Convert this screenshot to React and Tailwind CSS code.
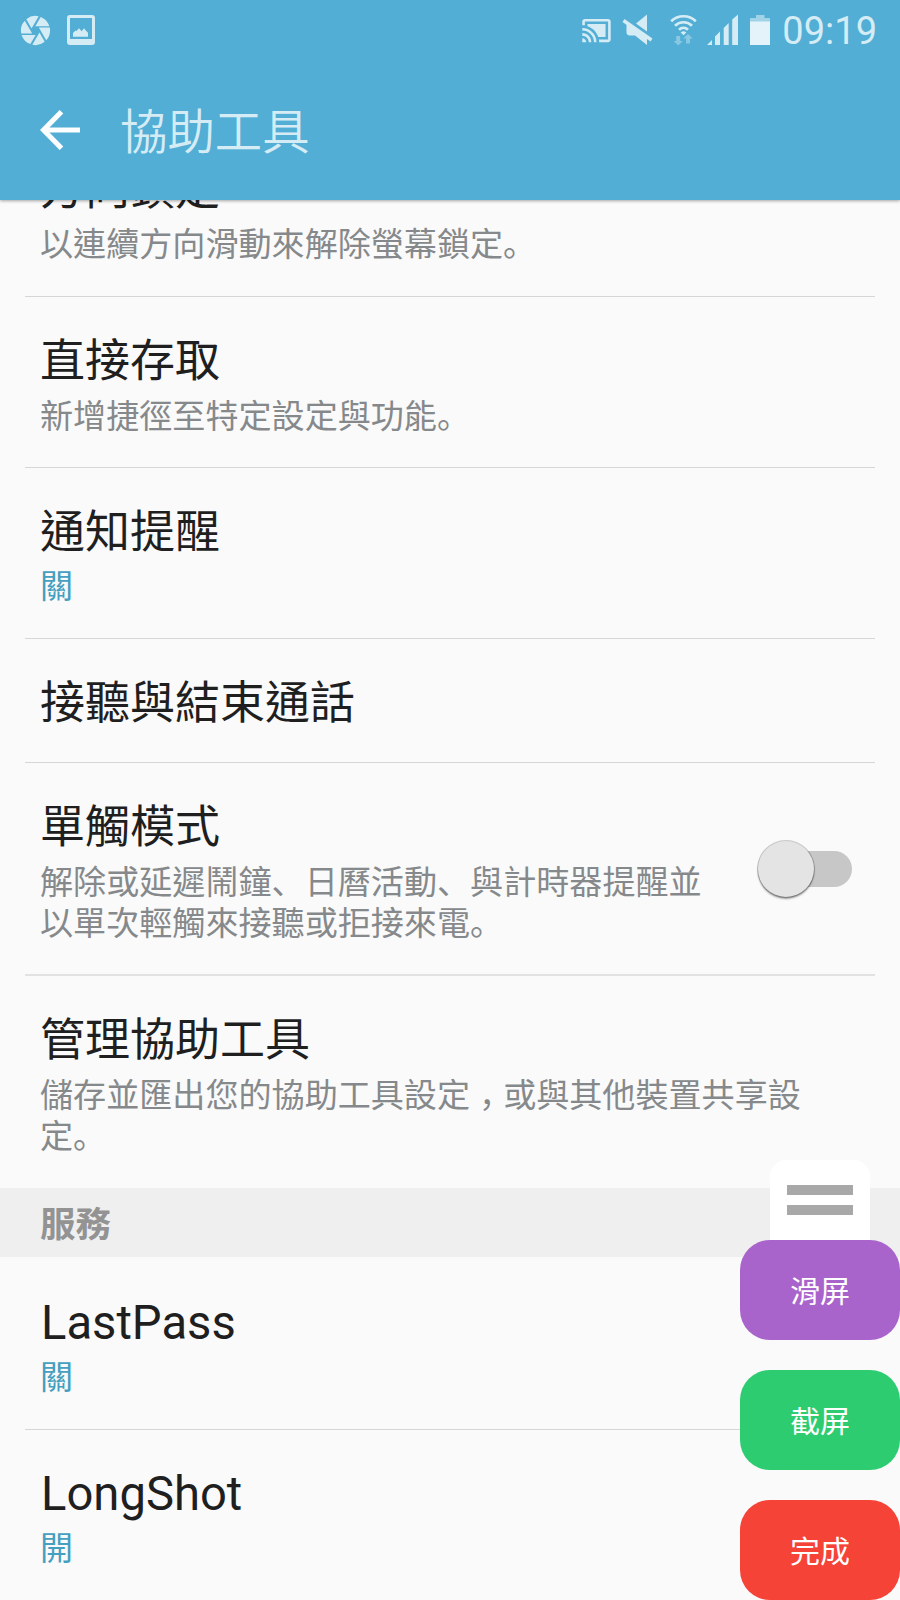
import { MdCamera, MdCastConnected } from "react-icons/md";

const rows = [
  { title: "方向鎖定", sub: "以連續方向滑動來解除螢幕鎖定。", height: "h-[172px]", line: "border-b border-[#d6d6d6]" },
  { title: "直接存取", sub: "新增捷徑至特定設定與功能。", height: "h-[171px]", line: "border-b border-[#d6d6d6]" },
  { title: "通知提醒", status: "關", height: "h-[171px]", line: "border-b border-[#d6d6d6]" },
  { title: "接聽與結束通話", height: "h-[124px]", line: "border-b border-[#d6d6d6]" },
  { title: "單觸模式", sub: "解除或延遲鬧鐘、日曆活動、與計時器提醒並以單次輕觸來接聽或拒接來電。", toggle: true, height: "h-[213px]", line: "border-b-2 border-[#e2e2e2]" },
  { title: "管理協助工具", sub: "儲存並匯出您的協助工具設定，或與其他裝置共享設定。", height: "h-[212px]", line: "" },
];

const services = [
  { title: "LastPass", status: "關", latin: true, pad: "pt-[35px]", height: "h-[173px]", line: "border-b border-[#d6d6d6]" },
  { title: "LongShot", status: "開", latin: true, pad: "pt-[33px]", height: "h-[170px]", line: "" },
];

// Full-width punctuation sits at the lower left of its cell.
function Punctuated({ text }) {
  return text.split(/([。、，])/).map((part, i) => {
    if (part === "，") return <span key={i} className="mr-[-9px] ml-[9px] font-['Noto_Sans_CJK_SC',sans-serif] leading-none">{part}</span>;
    if (part === "。" || part === "、") return <span key={i} className="font-['Noto_Sans_CJK_SC',sans-serif] leading-none">{part}</span>;
    return part;
  });
}

function Toggle() {
  return (
    <div className="relative mt-[74px] mr-[23px] h-[60px] w-[96px] shrink-0">
      <div className="absolute top-[14px] right-0 h-[36px] w-[72px] rounded-full bg-[#c7c7c7]" />
      <div className="absolute top-[4px] left-[2px] size-[56px] rounded-full bg-[#e4e4e4] shadow-[0_0_0_1px_rgba(0,0,0,0.2),0_2px_2px_rgba(0,0,0,0.4)]" />
    </div>
  );
}

function Row({ title, sub, status, toggle, latin, pad = "pt-[35px]", height, line }) {
  return (
    <div className={`mx-[25px] flex shrink-0 pl-[15px] ${height} ${line}`}>
      <div className={`min-w-0 flex-1 ${pad}`}>
        <div className={latin ? "h-[60px] pl-px text-[47.2px] leading-[62px] text-[#1f1f1f]" : "h-[60px] text-[45px] leading-[60px] text-[#1f1f1f]"}>{title}</div>
        {sub && <p className={`mt-[4px] text-[33.1px] leading-[41px] text-[#86898b] ${toggle ? "w-[670px]" : "w-[770px]"}`}><Punctuated text={sub} /></p>}
        {status && <p className={`text-[33px] leading-[41px] text-[#449fc0] ${latin ? "mt-[5px]" : "mt-[3px]"}`}>{status}</p>}
      </div>
      {toggle && <Toggle />}
    </div>
  );
}

function StatusIcons() {
  return (
    <svg className="h-[60px] w-[170px]" viewBox="610 0 170 60" fill="#d5ecf5">
      <path d="M647 14.5V31.5L636 23.5Z" />
      <path d="M626.5 22L647 36.5V45L635 35.5H630a3 3 0 0 1-3.5-3Z" />
      <path d="M623.5 20.5l28 19.500" stroke="#d5ecf5" strokeWidth="3.4" />
      <g fill="none" stroke="#d5ecf5" strokeWidth="2.7">
        <path d="M671.2 21.3a17.5 17.5 0 0 1 24.6 0" />
        <path d="M675 25.7a12.2 12.2 0 0 1 17 0" />
        <path d="M679 29.7a6.7 6.7 0 0 1 9 0" />
      </g>
      <path d="M680.7 32.6a4 4 0 0 1 5.6 0L683.5 35.3Z" />
      <g fill="#89c8e2">
        <path d="M676.2 36h4v5h2.6l-4.6 4.5-4.6-4.5h2.6Z" />
        <path d="M686 43.5h4v-5h2.8L688 34l-4.8 4.5h2.8Z" />
      </g>
      <path d="M707 45l5-5v5ZM715 36.5l5-5V45h-5ZM723.7 28l5-5v22h-5ZM732.2 19.5l5.8-5V45h-5.8Z" />
      <path d="M756 15h8.5v3H770v4h-20v-4h6Z" fill="#a0d3e7" />
      <path d="M750 21.5h20V45h-20Z" fill="#e4f3f9" />
    </svg>
  );
}

function FloatButton({ label, color }) {
  return (
    <div className={`flex h-[100px] w-[160px] items-center justify-center rounded-[30px] text-[30px] leading-[44px] text-white ${color}`}>
      <span className="pt-[4px]">{label}</span>
    </div>
  );
}

export default function App() {
  return (
    <div className="relative flex h-[1600px] w-[900px] flex-col overflow-hidden bg-[#fafafa] font-[Roboto,'Noto_Sans_CJK_TC',sans-serif]">
      <header className="relative z-10 h-[200px] shrink-0 bg-[#52aed5] shadow-[0_1px_3px_rgba(0,0,0,0.35)]">
        <div className="flex h-[60px] items-center pr-[23px] pl-[18px] text-[#d5ecf5]">
          <MdCamera className="size-[35px]" />
          <svg className="ml-[14px] h-[30px] w-[28px]" viewBox="0 0 28 30" fill="none">
            <path fillRule="evenodd" fill="currentColor" d="M3 0h22a3 3 0 0 1 3 3v24a3 3 0 0 1-3 3H3a3 3 0 0 1-3-3V3a3 3 0 0 1 3-3Zm0 3v21h22V3Z" />
            <path fill="currentColor" d="M6 21.800V18l2.500-2.500 1 .5 2.500-2.800 2.700 3 2.300-3 2.500 3 1.500 1.500V21.800Z" />
          </svg>
          <MdCastConnected className="ml-auto size-[31px]" />
          <div className="ml-[-2px]"><StatusIcons /></div>
          <span className="ml-[2px] pt-[2px] text-[38px] leading-[44px]">09:19</span>
        </div>
        <div className="flex h-[140px] items-center pb-[1px] pl-[40px]">
          <svg className="h-[40px] w-[40px]" viewBox="0 0 40 40" fill="none" stroke="#fcfeff" strokeWidth="5">
            <path d="M21.5 1.7 3.5 20l18 18.3M3 20h37" />
          </svg>
          <h1 className="ml-[40px] pt-[6px] text-[47.4px] leading-[70px] font-[350] text-[#d5ecf5]">協助工具</h1>
        </div>
      </header>
      <main className="flex min-h-0 flex-1 flex-col overflow-hidden">
        <div className="-mt-[75px] flex flex-col">
          {rows.map((r) => <Row key={r.title} {...r} />)}
          <h2 className="h-[69px] bg-[#efefef] pl-[40px] text-[35.5px] leading-[74px] font-bold text-[#939393]">服務</h2>
          {services.map((r) => <Row key={r.title} {...r} />)}
        </div>
      </main>
      <aside className="absolute right-0 bottom-0 z-20 flex w-[160px] flex-col items-center">
        <div className="flex h-[80px] w-[100px] flex-col items-center gap-[10px] rounded-t-[16px] bg-white pt-[25px]">
          <div className="h-[10px] w-[66px] bg-[#a8a8a8]" />
          <div className="h-[10px] w-[66px] bg-[#a8a8a8]" />
        </div>
        <div className="flex flex-col gap-[30px]">
          <FloatButton label="滑屏" color="bg-[#a964cc]" />
          <FloatButton label="截屏" color="bg-[#2ecc71]" />
          <FloatButton label="完成" color="bg-[#f64337]" />
        </div>
      </aside>
    </div>
  );
}
